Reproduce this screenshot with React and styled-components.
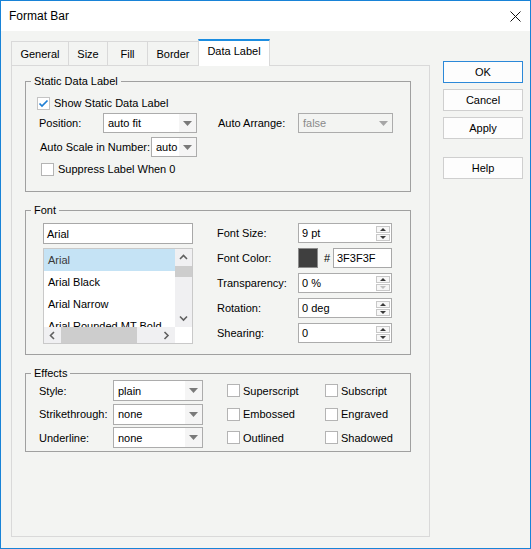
import React from 'react';
import styled, { createGlobalStyle } from 'styled-components';

const Global = createGlobalStyle`
  html, body { margin: 0; padding: 0; background: #ffffff; }
  body { font-family: "Liberation Sans", Arial, sans-serif; font-size: 11px; color: #000; }
  * { box-sizing: border-box; }
`;

const Window = styled.div`
  width: 531px;
  height: 549px;
  border: 1px solid #1883d7;
  background: #f3f4f2;
  display: flex;
  flex-direction: column;
  overflow: hidden;
`;

const TitleBar = styled.div`
  height: 30px;
  flex: none;
  background: #ffffff;
  display: flex;
  align-items: center;
  padding-left: 8px;
  font-size: 12px;
`;

const Title = styled.span`
  flex: 1;
`;

const CloseBox = styled.div`
  width: 30px;
  height: 30px;
  display: flex;
  align-items: center;
  justify-content: center;
`;

const Body = styled.div`
  flex: 1;
  display: flex;
  padding: 8px 0 0 10px;
`;

const LeftCol = styled.div`
  width: 419px;
  display: flex;
  flex-direction: column;
`;

const TabStrip = styled.div`
  height: 26px;
  display: flex;
  align-items: flex-end;
  position: relative;
  z-index: 1;
`;

const Tab = styled.div`
  width: ${(p) => p.$w}px;
  height: ${(p) => (p.$active ? 27 : 24)}px;
  margin-left: ${(p) => (p.$first ? 0 : -1)}px;
  margin-bottom: ${(p) => (p.$active ? -1 : 0)}px;
  border: 1px solid #d9d9d9;
  border-bottom: none;
  border-top: ${(p) => (p.$active ? '2px solid #1c8de0' : '1px solid #d9d9d9')};
  background: ${(p) => (p.$active ? '#ffffff' : '#f3f4f2')};
  display: flex;
  align-items: center;
  justify-content: center;
  padding-bottom: ${(p) => (p.$active ? 5 : 0)}px;
  position: relative;
  z-index: ${(p) => (p.$active ? 2 : 1)};
  font-size: 11px;
`;

const Panel = styled.div`
  height: 472px;
  border: 1px solid #d9d9d9;
  padding: 8px 0 0 13px;
  display: flex;
  flex-direction: column;
`;

const Group = styled.fieldset`
  margin: ${(p) => p.$mt || 0}px 0 0 0;
  padding: 0;
  width: 386px;
  min-width: 0;
  border: 1px solid #a0a0a0;
`;

const Legend = styled.legend`
  margin-left: 5px;
  padding: 0 3px;
  line-height: 14px;
  font-size: 11px;
`;

const GroupBody = styled.div`
  padding: ${(p) => p.$pt}px 0 ${(p) => p.$pb}px 0;
  display: flex;
  flex-direction: ${(p) => p.$dir || 'column'};
  gap: ${(p) => p.$gap || 0}px;
`;

const Row = styled.div`
  display: flex;
  align-items: center;
  height: ${(p) => p.$h}px;
  margin-top: ${(p) => p.$mt || 0}px;
  padding-left: ${(p) => p.$pl || 0}px;
  flex: none;
`;

const Label = styled.span`
  width: ${(p) => p.$w}px;
  margin-left: ${(p) => p.$ml || 0}px;
  white-space: nowrap;
  flex: none;
`;

const SelectBox = styled.div`
  width: ${(p) => p.$w}px;
  height: ${(p) => p.$h || 20}px;
  border: 1px solid #acacac;
  background: ${(p) => (p.$disabled ? '#f3f4f2' : '#ffffff')};
  color: ${(p) => (p.$disabled ? '#8a8a8a' : '#000')};
  display: flex;
  align-items: center;
  flex: none;
`;

const SelectText = styled.span`
  flex: 1;
  padding-left: 4px;
  white-space: nowrap;
  overflow: hidden;
`;

const SelectArrow = styled.span`
  width: 17px;
  align-self: stretch;
  display: flex;
  align-items: center;
  justify-content: center;
  background: ${(p) => (p.$disabled ? 'transparent' : '#f5f5f5')};
`;

const CheckBox = styled.span`
  width: 13px;
  height: 13px;
  border: 1px solid ${(p) => (p.$checked ? '#c4c4c4' : '#b4b4b4')};
  background: #ffffff;
  display: flex;
  align-items: center;
  justify-content: center;
  flex: none;
`;

const CheckLabel = styled.span`
  margin-left: ${(p) => p.$gap || 4}px;
  white-space: nowrap;
`;

const CheckItem = styled.div`
  display: flex;
  align-items: center;
  width: ${(p) => p.$w}px;
  margin-left: ${(p) => p.$ml || 0}px;
  flex: none;
`;

const FontLeft = styled.div`
  margin-left: 17px;
  width: 150px;
  display: flex;
  flex-direction: column;
  flex: none;
`;

const TextInput = styled.div`
  width: ${(p) => p.$w}px;
  height: ${(p) => p.$h}px;
  border: 1px solid #a8a8a8;
  background: #ffffff;
  display: flex;
  align-items: center;
  padding-left: 3px;
  flex: none;
`;

const ListBox = styled.div`
  margin-top: 4px;
  height: 96px;
  border: 1px solid #c9c9c9;
  background: #ffffff;
  display: grid;
  grid-template-columns: 1fr 17px;
  grid-template-rows: 1fr 16px;
  overflow: hidden;
`;

const ListItems = styled.div`
  overflow: hidden;
`;

const ListItem = styled.div`
  height: 22px;
  line-height: 22px;
  padding-left: 4px;
  white-space: nowrap;
  font-size: 11px;
  background: ${(p) => (p.$selected ? '#c5e3f5' : 'transparent')};
  color: ${(p) => (p.$selected ? '#3a3a3a' : '#000')};
`;

const VScroll = styled.div`
  background: #f0f0f2;
  display: flex;
  flex-direction: column;
`;

const HScroll = styled.div`
  background: #f0f0f2;
  display: flex;
`;

const ScrollBtn = styled.div`
  width: 17px;
  height: ${(p) => p.$h || 17}px;
  display: flex;
  align-items: center;
  justify-content: center;
  flex: none;
`;

const Thumb = styled.div`
  background: #cdcdcd;
  flex: none;
  width: ${(p) => p.$w}px;
  height: ${(p) => p.$h}px;
`;

const Spacer = styled.div`
  flex: 1;
`;

const Corner = styled.div`
  background: #ffffff;
`;

const FontRight = styled.div`
  margin-left: 24px;
  display: flex;
  flex-direction: column;
  gap: 5px;
`;

const SpinBox = styled.div`
  width: 94px;
  height: 20px;
  border: 1px solid #acacac;
  background: #ffffff;
  display: flex;
  align-items: center;
  padding-left: 3px;
  flex: none;
`;

const SpinText = styled.span`
  flex: 1;
`;

const SpinBtns = styled.div`
  display: flex;
  flex-direction: column;
  gap: 1px;
  margin-right: 1px;
`;

const SpinBtn = styled.div`
  width: 14px;
  height: 7px;
  border: 1px solid #c8c8c8;
  background: #f7f7f7;
  display: flex;
  align-items: center;
  justify-content: center;
`;

const Swatch = styled.span`
  width: 20px;
  height: 20px;
  background: #3f3f3f;
  border: 1px solid #8c8c8c;
  flex: none;
`;

const Hash = styled.span`
  margin-left: 6px;
  width: 9px;
  flex: none;
`;

const EffectsRows = styled.div`
  display: flex;
  flex-direction: column;
  gap: 2.5px;
`;

const SideCol = styled.div`
  width: 80px;
  margin-left: 13px;
  padding-top: 22px;
  display: flex;
  flex-direction: column;
`;

const Button = styled.button`
  height: 22px;
  margin: ${(p) => p.$mt || 0}px 0 0 0;
  padding: 0;
  border: 1px solid ${(p) => (p.$primary ? '#2b88d8' : '#cfcfcf')};
  background: #fdfdfd;
  font-family: inherit;
  font-size: 11px;
  color: #000;
`;

const Tri = ({ color = '#7a7a7a' }) => (
  <svg width="9" height="5" viewBox="0 0 9 5">
    <polygon points="0,0 9,0 4.5,5" fill={color} />
  </svg>
);

const SpinTri = ({ up, color = '#3a3a3a' }) => (
  <svg width="6" height="3" viewBox="0 0 6 3">
    <polygon points={up ? '0,3 6,3 3,0' : '0,0 6,0 3,3'} fill={color} />
  </svg>
);

const Chevron = ({ dir }) => {
  const pts = {
    up: '1,5 4.5,1.5 8,5',
    down: '1,1.5 4.5,5 8,1.5',
    left: '5,1 1.5,4.5 5,8',
    right: '1.5,1 5,4.5 1.5,8',
  }[dir];
  const vert = dir === 'up' || dir === 'down';
  return (
    <svg width={vert ? 9 : 7} height={vert ? 7 : 9} viewBox={vert ? '0 0 9 7' : '0 0 7 9'}>
      <polyline points={pts} fill="none" stroke="#606060" strokeWidth="1.6" />
    </svg>
  );
};

const Select = ({ w, h, value, disabled }) => (
  <SelectBox $w={w} $h={h} $disabled={disabled}>
    <SelectText>{value}</SelectText>
    <SelectArrow $disabled={disabled}>
      <Tri color={disabled ? '#a6a6a6' : '#7a7a7a'} />
    </SelectArrow>
  </SelectBox>
);

const Check = ({ checked, label, gap }) => (
  <>
    <CheckBox $checked={checked}>
      {checked && (
        <svg width="11" height="11" viewBox="0 0 11 11">
          <polyline points="1.5,5.5 4,8 9.5,2.5" fill="none" stroke="#1f7fd4" strokeWidth="1.7" />
        </svg>
      )}
    </CheckBox>
    <CheckLabel $gap={gap}>{label}</CheckLabel>
  </>
);

const Spinner = ({ value, downDisabled }) => (
  <SpinBox>
    <SpinText>{value}</SpinText>
    <SpinBtns>
      <SpinBtn>
        <SpinTri up />
      </SpinBtn>
      <SpinBtn>
        <SpinTri color={downDisabled ? '#c0c0c0' : '#3a3a3a'} />
      </SpinBtn>
    </SpinBtns>
  </SpinBox>
);

const tabs = [
  { name: 'General', w: 58 },
  { name: 'Size', w: 40 },
  { name: 'Fill', w: 41 },
  { name: 'Border', w: 52 },
  { name: 'Data Label', w: 72, active: true },
];

const fonts = ['Arial', 'Arial Black', 'Arial Narrow', 'Arial Rounded MT Bold'];

export default function App() {
  return (
    <>
      <Global />
      <Window>
        <TitleBar>
          <Title>Format Bar</Title>
          <CloseBox>
            <svg width="11" height="11" viewBox="0 0 11 11">
              <line x1="0.5" y1="0.5" x2="10.5" y2="10.5" stroke="#111" strokeWidth="1" />
              <line x1="10.5" y1="0.5" x2="0.5" y2="10.5" stroke="#111" strokeWidth="1" />
            </svg>
          </CloseBox>
        </TitleBar>
        <Body>
          <LeftCol>
            <TabStrip>
              {tabs.map((t, i) => (
                <Tab key={t.name} $w={t.w} $first={i === 0} $active={t.active}>
                  {t.name}
                </Tab>
              ))}
            </TabStrip>
            <Panel>
              <Group>
                <Legend>Static Data Label</Legend>
                <GroupBody $pt={8} $pb={15}>
                  <Row $h={14} $pl={11}>
                    <Check checked label="Show Static Data Label" />
                  </Row>
                  <Row $h={20} $mt={3} $pl={13}>
                    <Label $w={64}>Position:</Label>
                    <Select w={94} value="auto fit" />
                    <Label $w={80} $ml={21}>Auto Arrange:</Label>
                    <Select w={95} value="false" disabled />
                  </Row>
                  <Row $h={20} $mt={4} $pl={14}>
                    <Label $w={111}>Auto Scale in Number:</Label>
                    <Select w={46} value="auto" />
                  </Row>
                  <Row $h={14} $mt={5} $pl={15}>
                    <Check label="Suppress Label When 0" />
                  </Row>
                </GroupBody>
              </Group>

              <Group $mt={11}>
                <Legend>Font</Legend>
                <GroupBody $pt={6} $pb={10} $dir="row">
                  <FontLeft>
                    <TextInput $w={150} $h={21}>Arial</TextInput>
                    <ListBox>
                      <ListItems>
                        {fonts.map((f, i) => (
                          <ListItem key={f} $selected={i === 0}>
                            {f}
                          </ListItem>
                        ))}
                      </ListItems>
                      <VScroll>
                        <ScrollBtn>
                          <Chevron dir="up" />
                        </ScrollBtn>
                        <Thumb $w={17} $h={11} />
                        <Spacer />
                        <ScrollBtn>
                          <Chevron dir="down" />
                        </ScrollBtn>
                      </VScroll>
                      <HScroll>
                        <ScrollBtn $h={16}>
                          <Chevron dir="left" />
                        </ScrollBtn>
                        <Thumb $w={76} $h={16} />
                        <Spacer />
                        <ScrollBtn $h={16}>
                          <Chevron dir="right" />
                        </ScrollBtn>
                      </HScroll>
                      <Corner />
                    </ListBox>
                  </FontLeft>
                  <FontRight>
                    <Row $h={20}>
                      <Label $w={81}>Font Size:</Label>
                      <Spinner value="9 pt" />
                    </Row>
                    <Row $h={20}>
                      <Label $w={81}>Font Color:</Label>
                      <Swatch />
                      <Hash>#</Hash>
                      <TextInput $w={59} $h={20}>3F3F3F</TextInput>
                    </Row>
                    <Row $h={20}>
                      <Label $w={81}>Transparency:</Label>
                      <Spinner value="0 %" downDisabled />
                    </Row>
                    <Row $h={20}>
                      <Label $w={81}>Rotation:</Label>
                      <Spinner value="0 deg" />
                    </Row>
                    <Row $h={20}>
                      <Label $w={81}>Shearing:</Label>
                      <Spinner value="0" />
                    </Row>
                  </FontRight>
                </GroupBody>
              </Group>

              <Group $mt={11}>
                <Legend>Effects</Legend>
                <GroupBody $pt={0} $pb={3}>
                  <EffectsRows>
                    <Row $h={21} $pl={13}>
                      <Label $w={74}>Style:</Label>
                      <Select w={90} h={21} value="plain" />
                      <CheckItem $w={98} $ml={24}>
                        <Check label="Superscript" gap={3} />
                      </CheckItem>
                      <CheckItem $w={80}>
                        <Check label="Subscript" gap={3} />
                      </CheckItem>
                    </Row>
                    <Row $h={21} $pl={13}>
                      <Label $w={74}>Strikethrough:</Label>
                      <Select w={90} h={21} value="none" />
                      <CheckItem $w={98} $ml={24}>
                        <Check label="Embossed" gap={3} />
                      </CheckItem>
                      <CheckItem $w={80}>
                        <Check label="Engraved" gap={3} />
                      </CheckItem>
                    </Row>
                    <Row $h={21} $pl={13}>
                      <Label $w={74}>Underline:</Label>
                      <Select w={90} h={21} value="none" />
                      <CheckItem $w={98} $ml={24}>
                        <Check label="Outlined" gap={3} />
                      </CheckItem>
                      <CheckItem $w={80}>
                        <Check label="Shadowed" gap={3} />
                      </CheckItem>
                    </Row>
                  </EffectsRows>
                </GroupBody>
              </Group>
            </Panel>
          </LeftCol>
          <SideCol>
            <Button $primary>OK</Button>
            <Button $mt={6}>Cancel</Button>
            <Button $mt={6}>Apply</Button>
            <Button $mt={18}>Help</Button>
          </SideCol>
        </Body>
      </Window>
    </>
  );
}
